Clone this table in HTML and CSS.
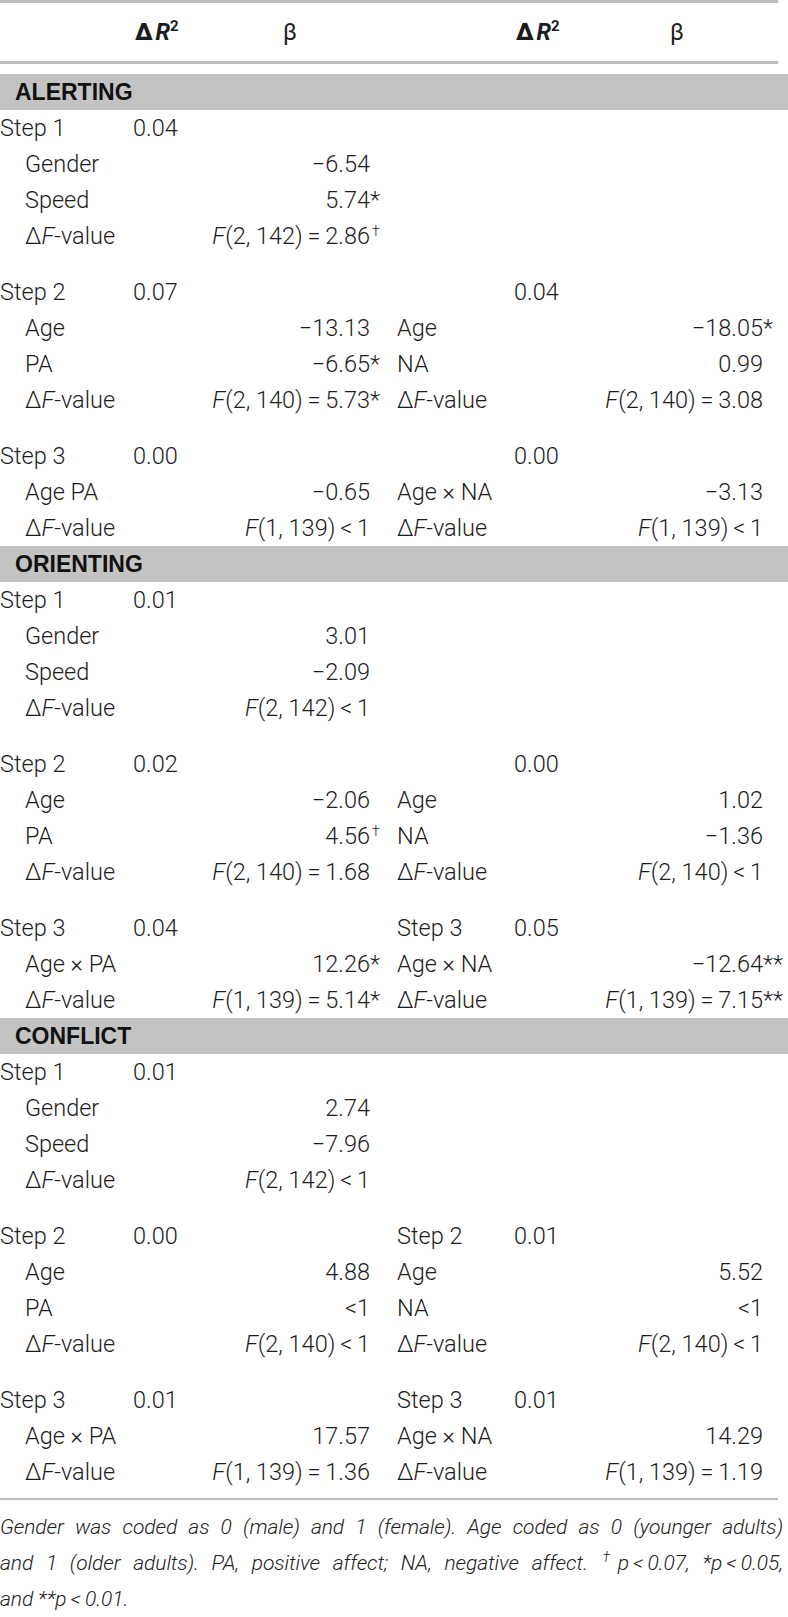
FILE: index.html
```html
<!DOCTYPE html>
<html lang="en">
<head>
    <meta charset="UTF-8">
    <title>Hierarchical regression table</title>
    <link rel="stylesheet" href="styles.css">
</head>
<body>
    <div class="head">
        <span></span>
        <span class="dr"><b>&Delta;</b><i>R</i><sup>2</sup></span>
        <span class="beta">&beta;</span>
        <span></span>
        <span class="dr"><b>&Delta;</b><i>R</i><sup>2</sup></span>
        <span class="beta">&beta;</span>
    </div>

    <!-- ALERTING -->
    <div class="bar">ALERTING</div>
    <div class="group">
        <div class="row"><span>Step 1</span><span>0.04</span><span></span><span></span><span></span><span></span></div>
        <div class="row"><span class="sub">Gender</span><span></span><span class="val">&minus;6.54</span><span></span><span></span><span></span></div>
        <div class="row"><span class="sub">Speed</span><span></span><span class="val">5.74<span class="mark">*</span></span><span></span><span></span><span></span></div>
        <div class="row"><span class="sub">&Delta;<i>F</i>-value</span><span></span><span class="val"><i>F</i>(2, 142)&thinsp;=&thinsp;2.86<span class="mark"><sup>&dagger;</sup></span></span><span></span><span></span><span></span></div>
    </div>
    <div class="group">
        <div class="row"><span>Step 2</span><span>0.07</span><span></span><span></span><span>0.04</span><span></span></div>
        <div class="row"><span class="sub">Age</span><span></span><span class="val">&minus;13.13</span><span class="lab">Age</span><span></span><span class="val">&minus;18.05<span class="mark">*</span></span></div>
        <div class="row"><span class="sub">PA</span><span></span><span class="val">&minus;6.65<span class="mark">*</span></span><span class="lab">NA</span><span></span><span class="val">0.99</span></div>
        <div class="row"><span class="sub">&Delta;<i>F</i>-value</span><span></span><span class="val"><i>F</i>(2, 140)&thinsp;=&thinsp;5.73<span class="mark">*</span></span><span class="lab">&Delta;<i>F</i>-value</span><span></span><span class="val"><i>F</i>(2, 140)&thinsp;=&thinsp;3.08</span></div>
    </div>
    <div class="group">
        <div class="row"><span>Step 3</span><span>0.00</span><span></span><span></span><span>0.00</span><span></span></div>
        <div class="row"><span class="sub">Age PA</span><span></span><span class="val">&minus;0.65</span><span class="lab">Age &times; NA</span><span></span><span class="val">&minus;3.13</span></div>
        <div class="row"><span class="sub">&Delta;<i>F</i>-value</span><span></span><span class="val"><i>F</i>(1, 139)&thinsp;&lt;&thinsp;1</span><span class="lab">&Delta;<i>F</i>-value</span><span></span><span class="val"><i>F</i>(1, 139)&thinsp;&lt;&thinsp;1</span></div>
    </div>

    <!-- ORIENTING -->
    <div class="bar">ORIENTING</div>
    <div class="group">
        <div class="row"><span>Step 1</span><span>0.01</span><span></span><span></span><span></span><span></span></div>
        <div class="row"><span class="sub">Gender</span><span></span><span class="val">3.01</span><span></span><span></span><span></span></div>
        <div class="row"><span class="sub">Speed</span><span></span><span class="val">&minus;2.09</span><span></span><span></span><span></span></div>
        <div class="row"><span class="sub">&Delta;<i>F</i>-value</span><span></span><span class="val"><i>F</i>(2, 142)&thinsp;&lt;&thinsp;1</span><span></span><span></span><span></span></div>
    </div>
    <div class="group">
        <div class="row"><span>Step 2</span><span>0.02</span><span></span><span></span><span>0.00</span><span></span></div>
        <div class="row"><span class="sub">Age</span><span></span><span class="val">&minus;2.06</span><span class="lab">Age</span><span></span><span class="val">1.02</span></div>
        <div class="row"><span class="sub">PA</span><span></span><span class="val">4.56<span class="mark"><sup>&dagger;</sup></span></span><span class="lab">NA</span><span></span><span class="val">&minus;1.36</span></div>
        <div class="row"><span class="sub">&Delta;<i>F</i>-value</span><span></span><span class="val"><i>F</i>(2, 140)&thinsp;=&thinsp;1.68</span><span class="lab">&Delta;<i>F</i>-value</span><span></span><span class="val"><i>F</i>(2, 140)&thinsp;&lt;&thinsp;1</span></div>
    </div>
    <div class="group">
        <div class="row"><span>Step 3</span><span>0.04</span><span></span><span class="lab">Step 3</span><span>0.05</span><span></span></div>
        <div class="row"><span class="sub">Age &times; PA</span><span></span><span class="val">12.26<span class="mark">*</span></span><span class="lab">Age &times; NA</span><span></span><span class="val">&minus;12.64<span class="mark">**</span></span></div>
        <div class="row"><span class="sub">&Delta;<i>F</i>-value</span><span></span><span class="val"><i>F</i>(1, 139)&thinsp;=&thinsp;5.14<span class="mark">*</span></span><span class="lab">&Delta;<i>F</i>-value</span><span></span><span class="val"><i>F</i>(1, 139)&thinsp;=&thinsp;7.15<span class="mark">**</span></span></div>
    </div>

    <!-- CONFLICT -->
    <div class="bar">CONFLICT</div>
    <div class="group">
        <div class="row"><span>Step 1</span><span>0.01</span><span></span><span></span><span></span><span></span></div>
        <div class="row"><span class="sub">Gender</span><span></span><span class="val">2.74</span><span></span><span></span><span></span></div>
        <div class="row"><span class="sub">Speed</span><span></span><span class="val">&minus;7.96</span><span></span><span></span><span></span></div>
        <div class="row"><span class="sub">&Delta;<i>F</i>-value</span><span></span><span class="val"><i>F</i>(2, 142)&thinsp;&lt;&thinsp;1</span><span></span><span></span><span></span></div>
    </div>
    <div class="group">
        <div class="row"><span>Step 2</span><span>0.00</span><span></span><span class="lab">Step 2</span><span>0.01</span><span></span></div>
        <div class="row"><span class="sub">Age</span><span></span><span class="val">4.88</span><span class="lab">Age</span><span></span><span class="val">5.52</span></div>
        <div class="row"><span class="sub">PA</span><span></span><span class="val">&lt;1</span><span class="lab">NA</span><span></span><span class="val">&lt;1</span></div>
        <div class="row"><span class="sub">&Delta;<i>F</i>-value</span><span></span><span class="val"><i>F</i>(2, 140)&thinsp;&lt;&thinsp;1</span><span class="lab">&Delta;<i>F</i>-value</span><span></span><span class="val"><i>F</i>(2, 140)&thinsp;&lt;&thinsp;1</span></div>
    </div>
    <div class="group">
        <div class="row"><span>Step 3</span><span>0.01</span><span></span><span class="lab">Step 3</span><span>0.01</span><span></span></div>
        <div class="row"><span class="sub">Age &times; PA</span><span></span><span class="val">17.57</span><span class="lab">Age &times; NA</span><span></span><span class="val">14.29</span></div>
        <div class="row"><span class="sub">&Delta;<i>F</i>-value</span><span></span><span class="val"><i>F</i>(1, 139)&thinsp;=&thinsp;1.36</span><span class="lab">&Delta;<i>F</i>-value</span><span></span><span class="val"><i>F</i>(1, 139)&thinsp;=&thinsp;1.19</span></div>
    </div>

    <div class="rule"></div>
    <div class="note">
        <p class="line">Gender was coded as 0 (male) and 1 (female). Age coded as 0 (younger adults)</p>
        <p class="line">and 1 (older adults). PA, positive affect; NA, negative affect. <sup>&dagger;</sup>p&thinsp;&lt;&thinsp;0.07, *p&thinsp;&lt;&thinsp;0.05,</p>
        <p>and **p&thinsp;&lt;&thinsp;0.01.</p>
    </div>
</body>
</html>
```

FILE: styles.css
```css
* {
    margin: 0;
    padding: 0;
    box-sizing: border-box;
}

body {
    font-family: Roboto, "Liberation Sans", sans-serif;
    font-weight: 300;
    font-size: 23.5px;
    color: #1c1c1c;
    background: #fff;
}

/* colunas: rotulo | dR2 | beta | rotulo | dR2 | beta */
.head,
.row {
    display: grid;
    grid-template-columns: 133px 77px 160px 144px 77px 172px;
    align-items: center;
}

.head {
    width: 778px;
    height: 64px;
    border-top: 3px solid #bdbdbd;
    border-bottom: 3px solid #bdbdbd;
    margin-bottom: 10px;
}

.head .dr {
    padding-left: 2px;
    font-weight: 700;
}

.head .dr b {
    margin-right: 3px;
}

.head sup {
    font-size: 15px;
    vertical-align: 9px;
    line-height: 0;
}

.head .beta {
    text-align: center;
    font-weight: 400;
}

.bar {
    height: 36px;
    line-height: 36px;
    background: #c3c3c3;
    padding-left: 15px;
    font-family: "Liberation Sans", Arial, sans-serif;
    font-weight: 700;
    font-size: 23px;
    color: #111;
}

.group + .group {
    margin-top: 20px;
}

.row {
    height: 36px;
    line-height: 36px;
    white-space: nowrap;
}

.row .sub {
    padding-left: 25px;
}

.row .lab {
    padding-left: 27px;
}

.row .val {
    text-align: right;
}

.mark {
    display: inline-block;
    width: 0;
    text-align: left;
    white-space: nowrap;
}

.mark sup,
.note sup {
    font-size: 14px;
    vertical-align: 8px;
    line-height: 0;
    margin-left: 2px;
}

.rule {
    width: 778px;
    border-top: 2px solid #bdbdbd;
    margin-top: 8px;
}

/* nota de rodape em italico */
.note {
    padding-top: 9px;
    font-style: italic;
    font-size: 21px;
    letter-spacing: -0.1px;
    line-height: 36px;
    color: #222;
    width: 783px;
}

.note .line {
    text-align: justify;
    text-align-last: justify;
    white-space: nowrap;
}
```
